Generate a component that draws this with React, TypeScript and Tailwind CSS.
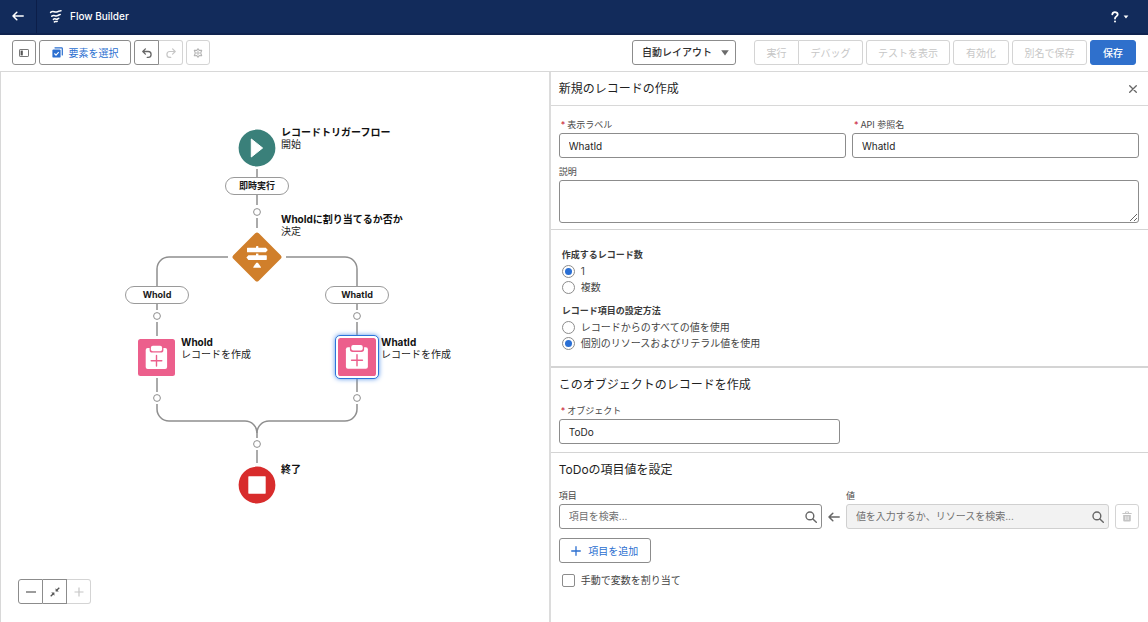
import { useState } from 'react';
import type { ReactNode } from 'react';

const PINK = '#ec5f8c';

function ArrowLeft({ className }: { className?: string }) {
  return (
    <svg viewBox="0 0 12 10" fill="none" stroke="currentColor" strokeWidth="1.5" strokeLinecap="round" strokeLinejoin="round" className={className} aria-hidden="true">
      <path d="M11.2 5H1M4.8 1.2L1 5l3.8 3.8" />
    </svg>
  );
}

function SearchIcon() {
  return (
    <svg viewBox="0 0 12 12" width="12" height="12" fill="none" stroke="#666" strokeWidth="1.4" strokeLinecap="round" className="shrink-0" aria-hidden="true">
      <circle cx="4.9" cy="4.9" r="3.9" />
      <path d="M7.9 7.9l3.4 3.4" />
    </svg>
  );
}

function FlowLogo() {
  return (
    <svg viewBox="0 0 14 14" width="14" height="14" fill="none" stroke="white" strokeWidth="1.5" strokeLinecap="round" aria-hidden="true">
      <path d="M1.6 3.4C4 1.4 5.3 3.6 7.6 3S10.4 1.8 12 1.8" />
      <path d="M2.8 7.2C5 5.4 6 7.4 8 6.8s2-1.2 3.2-1.2" />
      <path d="M4.4 10.4C6 9 6.8 10.6 8 10.2s1.2-.9 1.8-.9" />
      <path d="M5.4 12.9c1-.9 1.8 0 2.8-.5" />
    </svg>
  );
}

function Header() {
  return (
    <header className="flex h-[35px] shrink-0 items-stretch border-b-2 border-[#0f234f] bg-[#122b5b] text-white">
      <button type="button" aria-label="戻る" className="flex w-[37px] items-center justify-center border-r border-[#0c1e49] pb-px">
        <ArrowLeft className="h-[10px] w-3" />
      </button>
      <div className="ml-3 flex items-center gap-[7px] pb-px">
        <FlowLogo />
        <h1 className="text-[10px] font-medium leading-4">Flow Builder</h1>
      </div>
      <button type="button" aria-label="ヘルプ" className="ml-auto mr-[19px] flex items-center gap-1">
        <svg viewBox="0 0 8 12" width="8" height="12" fill="none" stroke="white" strokeWidth="1.8" strokeLinecap="round" aria-hidden="true">
          <path d="M1.3 3.4C1.5 1.8 2.5 1.1 3.9 1.1c1.6 0 2.8.9 2.8 2.4C6.7 5.4 4 5.4 4 7.5" />
          <path d="M4 10.5v.1" strokeWidth="2" />
        </svg>
        <svg viewBox="0 0 6 4" width="6" height="4" fill="white" aria-hidden="true">
          <path d="M.6.6h4.8L3 3.4z" />
        </svg>
      </button>
    </header>
  );
}

const btn = 'flex h-[25px] items-center justify-center border text-[10px] leading-4';
const on = 'border-[#8c8c8c] text-[#666]';
const off = 'border-[#d4d4d4] text-[#c6c6c6]';

function Toolbar() {
  return (
    <div className="flex shrink-0 flex-wrap items-center gap-[3px] border-b border-[#d8d8d8] px-3 pb-[6px] pt-[5px]">
      <button type="button" aria-label="ツールボックスの切り替え" className={`${btn} ${on} w-6 rounded-[3px]`}>
        <svg viewBox="0 0 10 8" width="10" height="8" aria-hidden="true">
          <rect x=".5" y=".5" width="9" height="7" rx=".6" fill="none" stroke="#777" />
          <rect x="1.6" y="1.6" width="2.2" height="4.8" fill="#555" />
        </svg>
      </button>
      <button type="button" className={`${btn} w-[92px] gap-[6px] rounded-[3px] border-[#8c8c8c] text-[#2b6fd0]`}>
        <svg viewBox="0 0 11 11" width="11" height="11" aria-hidden="true">
          <path d="M3 .8h6.6a.7.7 0 0 1 .7.7V8" fill="none" stroke="#2b6fd0" strokeWidth="1.2" strokeLinecap="round" />
          <rect x=".4" y="2.4" width="8.2" height="8.2" rx="1.2" fill="#2b6fd0" />
          <path d="M2.4 6.5l1.6 1.6 2.7-3" fill="none" stroke="white" strokeWidth="1.1" />
        </svg>
        要素を選択
      </button>
      <div className="flex">
        <button type="button" aria-label="元に戻す" className={`${btn} ${on} w-[25px] rounded-l-[3px]`}>
          <svg viewBox="0 0 10 10" width="10" height="10" fill="none" stroke="currentColor" strokeWidth="1.3" strokeLinecap="round" strokeLinejoin="round" aria-hidden="true">
            <path d="M3.4.9L.8 3.5l2.6 2.6M1 3.5h5.2a2.9 2.9 0 0 1 0 5.8H5.2" />
          </svg>
        </button>
        <button type="button" disabled aria-label="やり直し" className={`${btn} ${off} w-6 rounded-r-[3px] border-l-0`}>
          <svg viewBox="0 0 10 10" width="10" height="10" fill="none" stroke="currentColor" strokeWidth="1.2" strokeLinecap="round" strokeLinejoin="round" aria-hidden="true">
            <path d="M6.6.9l2.6 2.6-2.6 2.6M9 3.5H3.8a2.9 2.9 0 0 0 0 5.8h1" />
          </svg>
        </button>
      </div>
      <button type="button" disabled aria-label="設定" className={`${btn} ${off} w-6 rounded-[3px]`}>
        <svg viewBox="0 0 10 10" width="10" height="10" fill="none" stroke="#b4b4b4" strokeLinejoin="round" aria-hidden="true">
          <path d="M5 .7l1.2 1.7 2.5-.2-1 2.8 1 2.8-2.5-.2L5 9.3 3.8 7.6l-2.5.2 1-2.8-1-2.8 2.5.2z" strokeWidth="1.1" />
          <circle cx="5" cy="5" r="1.2" />
        </svg>
      </button>

      <div className="relative ml-auto mr-[15px] w-[104px]">
        <select aria-label="レイアウト" className="block h-[25px] w-full appearance-none rounded-[3px] border border-[#8c8c8c] bg-white pl-[9px] text-[10px] font-medium text-[#2e2e2e]">
          <option>自動レイアウト</option>
          <option>自由形式</option>
        </select>
        <svg viewBox="0 0 8 6" width="8" height="6" fill="#6b6b6b" className="pointer-events-none absolute right-[7px] top-[10px]" aria-hidden="true">
          <path d="M.2.3h7.6L4 5.6z" />
        </svg>
      </div>
      <div className="flex">
        <button type="button" disabled className={`${btn} ${off} w-[45px] rounded-l-[3px]`}>実行</button>
        <button type="button" disabled className={`${btn} ${off} w-16 rounded-r-[3px] border-l-0`}>デバッグ</button>
      </div>
      <button type="button" disabled className={`${btn} ${off} w-[84px] rounded-[3px]`}>テストを表示</button>
      <button type="button" disabled className={`${btn} ${off} w-14 rounded-[3px]`}>有効化</button>
      <button type="button" disabled className={`${btn} ${off} w-[75px] rounded-[3px]`}>別名で保存</button>
      <button type="button" className={`${btn} w-[46px] rounded-[3px] border-[#2f70cc] bg-[#2f70cc] font-medium text-white`}>保存</button>
    </div>
  );
}

function Connectors() {
  const dots = [[257, 140], [157, 244], [357, 244], [157, 326], [357, 326], [257, 372]];
  return (
    <svg viewBox="0 0 549 550" width="549" height="550" fill="none" className="absolute left-0 top-0" aria-hidden="true">
      <g stroke="#8f8f8f" strokeWidth="1.5">
        <path d="M257 97v8M257 123v10M257 146v10" />
        <path d="M228 185h-59a12 12 0 0 0-12 12v17M286 185h59a12 12 0 0 1 12 12v17" />
        <path d="M157 232v6M357 232v6M157 250v14M357 250v14" />
        <path d="M157 306v14M357 306v14" />
        <path d="M157 332v5a12 12 0 0 0 12 12h76a12 12 0 0 1 12 12v5" />
        <path d="M357 332v5a12 12 0 0 1-12 12h-76a12 12 0 0 0-12 12" />
        <path d="M257 378v13" />
      </g>
      <g stroke="#8f8f8f">
        {dots.map(([x, y]) => (
          <circle key={`${x}-${y}`} cx={x} cy={y} r="3.4" />
        ))}
      </g>
    </svg>
  );
}

function NodeLabel({ x, y, title, type }: { x: number; y: number; title: string; type?: string }) {
  return (
    <div className="absolute whitespace-nowrap text-[10px] leading-3 text-[#222]" style={{ left: x, top: y }}>
      <p className="font-bold text-[#111]">{title}</p>
      {type && <p>{type}</p>}
    </div>
  );
}

function Pill({ x, y, children }: { x: number; y: number; children: ReactNode }) {
  return (
    <div className="absolute flex h-[18px] w-16 items-center justify-center rounded-full border border-[#9a9a9a] bg-white text-[9px] font-bold leading-3 text-[#1a1a1a]" style={{ left: x, top: y }}>
      {children}
    </div>
  );
}

function ClipboardIcon() {
  return (
    <svg viewBox="0 0 37 37" className="block h-full w-full" aria-hidden="true">
      <rect width="37" height="37" rx="2.5" fill={PINK} />
      <rect x="7.7" y="9" width="21.4" height="21" rx="2" fill="white" />
      <rect x="11.6" y="6" width="13.8" height="7.6" rx="2.6" fill={PINK} />
      <rect x="12.9" y="6.8" width="11.2" height="5.4" rx="1.9" fill="white" />
      <path d="M18.5 16.4v10.6M13.2 21.7h10.6" stroke={PINK} strokeWidth="1.4" strokeLinecap="round" />
    </svg>
  );
}

function Canvas() {
  return (
    <section aria-label="フローキャンバス" className="relative min-w-0 flex-1 overflow-hidden border-l border-[#d8d8d8]">
      <div className="absolute -left-px top-0">
        <Connectors />

        <svg viewBox="0 0 38 38" width="38" height="38" className="absolute left-[238px] top-[57px]" aria-hidden="true">
          <circle cx="19" cy="19" r="18.4" fill="#3a807a" />
          <path d="M13.3 10v18l11.3-9z" fill="white" stroke="white" strokeLinejoin="round" />
        </svg>
        <NodeLabel x={281} y={54} title="レコードトリガーフロー" type="開始" />
        <Pill x={225} y={105}>即時実行</Pill>

        <svg viewBox="0 0 50 50" width="50" height="50" className="absolute left-[232px] top-[160px]" aria-hidden="true">
          <rect x="7" y="7" width="36" height="36" rx="2.5" transform="rotate(45 25 25)" fill="#d07f2b" />
          <g fill="white">
            <rect x="24" y="14" width="2.4" height="3" rx=".8" />
            <path d="M15.6 15.7h18.2l2 2.3-2 2.3H15.6a.6.6 0 0 1-.6-.6v-3.4a.6.6 0 0 1 .6-.6z" />
            <rect x="24" y="21.6" width="2.4" height="2.4" />
            <path d="M34.2 23.3H16.4l-2 2.3 2 2.3h17.8a.6.6 0 0 0 .6-.6v-3.4a.6.6 0 0 0-.6-.6z" />
            <path d="M24.3 30.7h1.6l3 4.2q.3.9-.6.9h-6.4q-.9 0-.6-.9z" />
          </g>
        </svg>
        <NodeLabel x={281} y={141} title="WhoIdに割り当てるか否か" type="決定" />

        <Pill x={125} y={214}>WhoId</Pill>
        <Pill x={325} y={214}>WhatId</Pill>

        <div className="absolute left-[138px] top-[267px] h-[37px] w-[37px]">
          <ClipboardIcon />
        </div>
        <NodeLabel x={181} y={264} title="WhoId" type="レコードを作成" />

        <div className="absolute left-[335px] top-[263px] h-11 w-11 rounded-[5px] border border-[#2c74da] bg-white p-[2px] shadow-[0_0_5px_#5b96ea]">
          <ClipboardIcon />
        </div>
        <NodeLabel x={381} y={264} title="WhatId" type="レコードを作成" />

        <svg viewBox="0 0 38 38" width="38" height="38" className="absolute left-[238px] top-[394px]" aria-hidden="true">
          <circle cx="19" cy="19" r="18.4" fill="#d82c2c" />
          <rect x="10.3" y="10.3" width="17.4" height="17.4" rx=".6" fill="white" />
        </svg>
        <NodeLabel x={281} y={391} title="終了" />
      </div>

      <div className="absolute bottom-[18px] left-[17px] flex">
        <button type="button" aria-label="縮小" className={`${btn} ${on} w-[25px] rounded-l-[3px]`}>
          <svg viewBox="0 0 10 10" width="10" height="10" stroke="currentColor" strokeWidth="1.3" aria-hidden="true"><path d="M0 5h10" /></svg>
        </button>
        <button type="button" aria-label="画面に合わせる" className={`${btn} ${on} w-6 border-l-0`}>
          <svg viewBox="0 0 10 10" width="10" height="10" stroke="#555" strokeWidth="1.3" fill="#555" aria-hidden="true">
            <path d="M9.3.7L6.7 3.3M.7 9.3l2.6-2.6" />
            <path d="M5.6 1.2v3.2h3.2zM4.4 8.8V5.6H1.2z" stroke="none" />
          </svg>
        </button>
        <button type="button" disabled aria-label="拡大" className={`${btn} ${off} w-6 rounded-r-[3px] border-l-0`}>
          <svg viewBox="0 0 10 10" width="10" height="10" stroke="currentColor" strokeWidth="1.2" aria-hidden="true"><path d="M.5 5h9M5 .5v9" /></svg>
        </button>
      </div>
    </section>
  );
}

const field = 'block h-[25px] w-full rounded-[3px] border border-[#8c8c8c] bg-white px-[9px] text-[10px] text-[#1f1f1f] outline-none';

function FieldLabel({ id, required, children }: { id: string; required?: boolean; children: ReactNode }) {
  return (
    <label htmlFor={id} className="flex h-4 items-center text-[9px] leading-4 text-[#484848]">
      {required && <span className="ml-[2px] mr-[2px] text-[#c8102e]">*</span>}
      {children}
    </label>
  );
}

function TextField({ id, label, value }: { id: string; label: string; value: string }) {
  return (
    <div>
      <FieldLabel id={id} required>{label}</FieldLabel>
      <input id={id} type="text" defaultValue={value} required className={field} />
    </div>
  );
}

function RadioGroup({ name, legend, options, initial }: { name: string; legend: string; options: string[]; initial: number }) {
  const [selected, setSelected] = useState(initial);
  return (
    <fieldset className="px-[3px]">
      <legend className="text-[9px] font-bold leading-4 text-[#3a3a3a]">{legend}</legend>
      {options.map((option, i) => (
        <label key={option} className="flex h-4 items-center gap-[6px] text-[10px] leading-4 text-[#444]">
          <input
            type="radio"
            name={name}
            checked={selected === i}
            onChange={() => setSelected(i)}
            className="h-[13px] w-[13px] shrink-0 appearance-none rounded-full border border-[#8c8c8c] bg-white bg-clip-content p-[2px] checked:bg-[#2a6fd4]"
          />
          {option}
        </label>
      ))}
    </fieldset>
  );
}

function Panel() {
  return (
    <aside className="w-[52.2%] shrink-0 border-l-2 border-[#dcdcdc]">
      <div className="flex h-[34px] items-center justify-between border-b border-[#d8d8d8] pl-2 pr-[11px]">
        <h2 className="text-xs leading-4 text-[#1f1f1f]">新規のレコードの作成</h2>
        <button type="button" aria-label="閉じる">
          <svg viewBox="0 0 8 8" width="8" height="8" stroke="#666" strokeWidth="1.3" strokeLinecap="round" aria-hidden="true"><path d="M.7.7l6.6 6.6M7.3.7L.7 7.3" /></svg>
        </button>
      </div>

      <div className="border-b border-[#d4d4d4] pb-[6px] pl-2 pr-[9px] pt-[11px]">
        <div className="grid grid-cols-2 gap-[6px]">
          <TextField id="label" label="表示ラベル" value="WhatId" />
          <TextField id="api-name" label="API 参照名" value="WhatId" />
        </div>
        <div className="mt-[6px]">
          <FieldLabel id="description">説明</FieldLabel>
          <textarea id="description" className="block h-[43px] w-full resize rounded-[3px] border border-[#8c8c8c] bg-white px-[9px] py-1 text-[10px] outline-none" />
        </div>
      </div>

      <div className="flex flex-col gap-2 border-b-2 border-[#d4d4d4] pb-[15px] pl-2 pr-[9px] pt-[17px]">
        <RadioGroup name="count" legend="作成するレコード数" options={['1', '複数']} initial={0} />
        <RadioGroup name="method" legend="レコード項目の設定方法" options={['レコードからのすべての値を使用', '個別のリソースおよびリテラル値を使用']} initial={1} />
      </div>

      <div className="border-b border-[#d4d4d4] pb-2 pl-2 pr-[9px] pt-[9px]">
        <h3 className="mb-[10px] text-xs leading-4 text-[#1f1f1f]">このオブジェクトのレコードを作成</h3>
        <div className="w-[48.5%]">
          <TextField id="object" label="オブジェクト" value="ToDo" />
        </div>
      </div>

      <div className="pb-4 pl-2 pr-[9px] pt-[9px]">
        <h3 className="mb-[10px] text-xs leading-4 text-[#1f1f1f]">ToDoの項目値を設定</h3>
        <div className="flex items-end gap-[6px]">
          <div className="min-w-0 flex-1">
            <FieldLabel id="field">項目</FieldLabel>
            <div className="flex h-[25px] items-center rounded-[3px] border border-[#8c8c8c] bg-white pl-[9px] pr-1">
              <input id="field" type="text" placeholder="項目を検索..." className="min-w-0 flex-1 bg-transparent text-[10px] outline-none placeholder:text-[#707070]" />
              <SearchIcon />
            </div>
          </div>
          <div className="flex h-[25px] items-center text-[#666]">
            <ArrowLeft className="h-[10px] w-3" />
          </div>
          <div className="min-w-0 flex-1">
            <FieldLabel id="value">値</FieldLabel>
            <div className="flex h-[25px] items-center rounded-[3px] border border-[#d0d0d0] bg-[#f2f2f2] pl-[9px] pr-1">
              <input id="value" type="text" disabled placeholder="値を入力するか、リソースを検索..." className="min-w-0 flex-1 bg-transparent text-[10px] outline-none placeholder:text-[#707070]" />
              <SearchIcon />
            </div>
          </div>
          <button type="button" disabled aria-label="削除" className={`${btn} ${off} w-6 shrink-0 rounded-[3px]`}>
            <svg viewBox="0 0 10 11" width="10" height="11" fill="#c4c4c4" aria-hidden="true">
              <path d="M3 2V1.2Q3 .4 3.8.4h2.4Q7 .4 7 1.2V2h2.2q.5 0 .5.5v.6H.3v-.6Q.3 2 .8 2zm.9 0h2.2v-.7H3.9z" />
              <path fillRule="evenodd" d="M1.2 4h7.6v5.6q0 1-1 1H2.2q-1 0-1-1zM3.5 5.3v3.8h.8V5.3zm2.2 0v3.8h.8V5.3z" />
            </svg>
          </button>
        </div>
        <button type="button" className={`${btn} mt-[9px] w-[92px] gap-[7px] rounded-[3px] border-[#8c8c8c] text-[#2b6fd0]`}>
          <svg viewBox="0 0 10 10" width="10" height="10" stroke="currentColor" strokeWidth="1.3" strokeLinecap="round" aria-hidden="true"><path d="M.7 5h8.6M5 .7v8.6" /></svg>
          項目を追加
        </button>
        <label className="mt-[9px] flex h-4 items-center gap-[6px] pl-[3px] text-[10px] leading-4 text-[#444]">
          <input type="checkbox" className="h-[13px] w-[13px] shrink-0 appearance-none rounded-[2px] border border-[#8c8c8c] bg-white bg-clip-content p-[2px] checked:bg-[#2a6fd4]" />
          手動で変数を割り当て
        </label>
      </div>
    </aside>
  );
}

export default function App() {
  return (
    <div className="flex min-h-screen flex-col bg-white font-['Inter','Noto_Sans_CJK_JP',sans-serif]">
      <Header />
      <Toolbar />
      <main className="flex flex-1">
        <Canvas />
        <Panel />
      </main>
    </div>
  );
}
